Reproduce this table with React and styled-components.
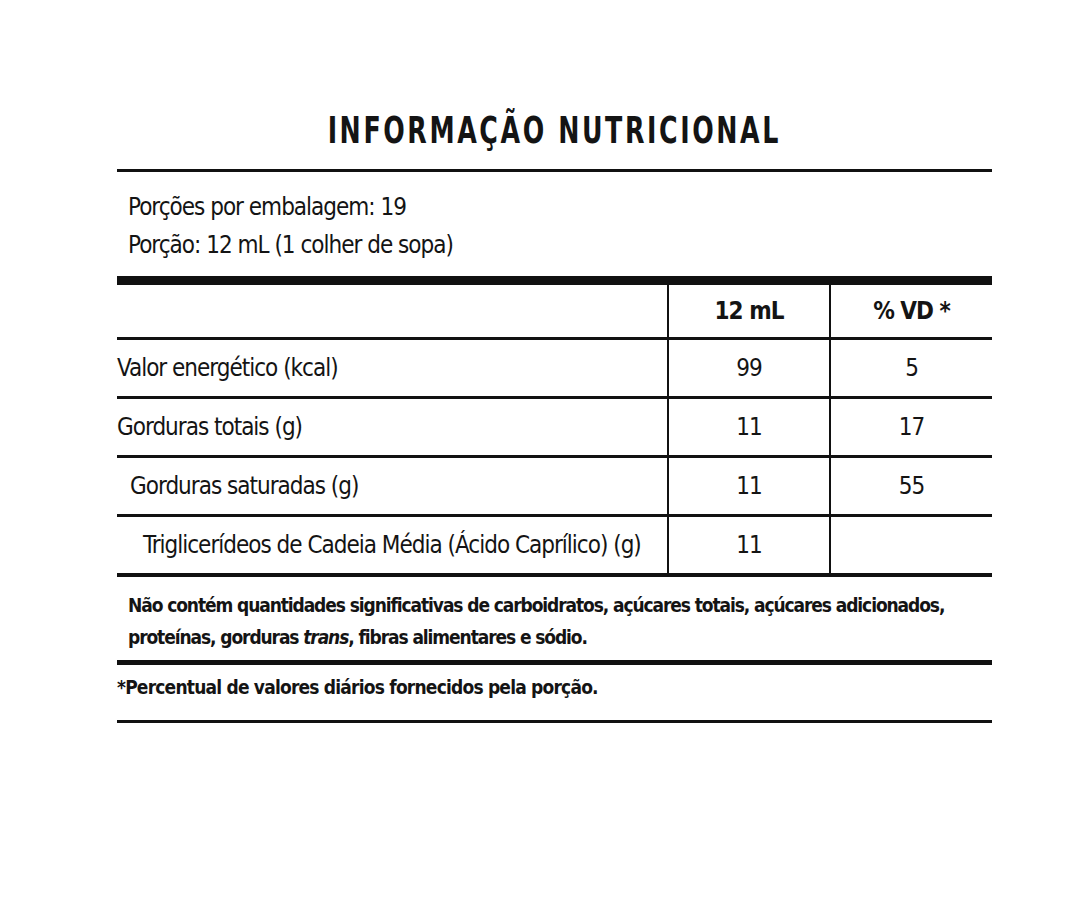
import React from 'react'
import styled, { createGlobalStyle } from 'styled-components'

const GlobalStyle = createGlobalStyle`
    html, body {
        margin: 0;
        padding: 0;
        background: #ffffff;
    }
    body {
        font-family: "DejaVu Sans Condensed", "Liberation Sans Narrow", "Liberation Sans", sans-serif;
        color: #141414;
    }
`;

const Page = styled.div`
    width: 1091px;
    height: 900px;
    padding: 108px 0 0 117px;
    box-sizing: border-box;
`;

const Label = styled.div`
    width: 875px;
`;

const TitleRow = styled.div`
    height: 61px;
    display: flex;
    justify-content: center;
`;

const Title = styled.h1`
    margin: 0;
    font-size: 38px;
    line-height: 44px;
    font-weight: 700;
    letter-spacing: 3.5px;
    white-space: nowrap;
    transform: scaleX(0.74);
`;

const Rule = styled.div`
    height: ${p => p.$size}px;
    background: #111;
`;

const Serving = styled.div`
    padding: 16px 0 0 11px;
    height: 104px;
    box-sizing: border-box;
    font-size: 24px;
    line-height: 38px;
    letter-spacing: -1px;
`;

const Grid = styled.div`
    display: grid;
    grid-template-columns: 550px 162px 163px;
    border-bottom: 4px solid #111;
`;

const Cell = styled.div`
    height: ${p => p.$h}px;
    box-sizing: border-box;
    display: flex;
    align-items: center;
    justify-content: ${p => (p.$num ? 'center' : 'flex-start')};
    padding-left: ${p => p.$indent || 0}px;
    font-size: 24px;
    letter-spacing: -1px;
    white-space: nowrap;
    font-weight: ${p => (p.$bold ? 700 : 400)};
    border-top: ${p => (p.$first ? 'none' : '3px solid #111')};
    border-left: ${p => (p.$num ? '2px solid #111' : 'none')};
`;

const Note = styled.p`
    margin: 0;
    padding: 12px 0 7px 11px;
    font-size: 19px;
    line-height: 32px;
    font-weight: 700;
    letter-spacing: -1.1px;

    em {
        font-style: italic;
    }
`;

const Footnote = styled.p`
    margin: 0;
    padding: 7px 0 18px 0;
    font-size: 19px;
    line-height: 30px;
    font-weight: 700;
    letter-spacing: -0.8px;
`;

const rows = [
    { name: 'Valor energético (kcal)', indent: 0, qty: '99', vd: '5' },
    { name: 'Gorduras totais (g)', indent: 0, qty: '11', vd: '17' },
    { name: 'Gorduras saturadas (g)', indent: 13, qty: '11', vd: '55' },
    { name: 'Triglicerídeos de Cadeia Média (Ácido Caprílico) (g)', indent: 26, qty: '11', vd: '' },
];

export default function App() {
    return (
        <Page>
            <GlobalStyle />
            <Label>
                <TitleRow>
                    <Title>INFORMAÇÃO NUTRICIONAL</Title>
                </TitleRow>
                <Rule $size={3} />
                <Serving>
                    <div>Porções por embalagem: 19</div>
                    <div>Porção: 12 mL (1 colher de sopa)</div>
                </Serving>
                <Rule $size={9} />
                <Grid>
                    <Cell $first $h={52} />
                    <Cell $first $num $bold $h={52}>12 mL</Cell>
                    <Cell $first $num $bold $h={52}>% VD *</Cell>
                    {rows.map(r => (
                        <React.Fragment key={r.name}>
                            <Cell $h={59} $indent={r.indent}>{r.name}</Cell>
                            <Cell $h={59} $num>{r.qty}</Cell>
                            <Cell $h={59} $num>{r.vd}</Cell>
                        </React.Fragment>
                    ))}
                </Grid>
                <Note>
                    Não contém quantidades significativas de carboidratos, açúcares totais, açúcares adicionados,
                    <br />
                    proteínas, gorduras <em>trans</em>, fibras alimentares e sódio.
                </Note>
                <Rule $size={5} />
                <Footnote>*Percentual de valores diários fornecidos pela porção.</Footnote>
                <Rule $size={3} />
            </Label>
        </Page>
    );
}
